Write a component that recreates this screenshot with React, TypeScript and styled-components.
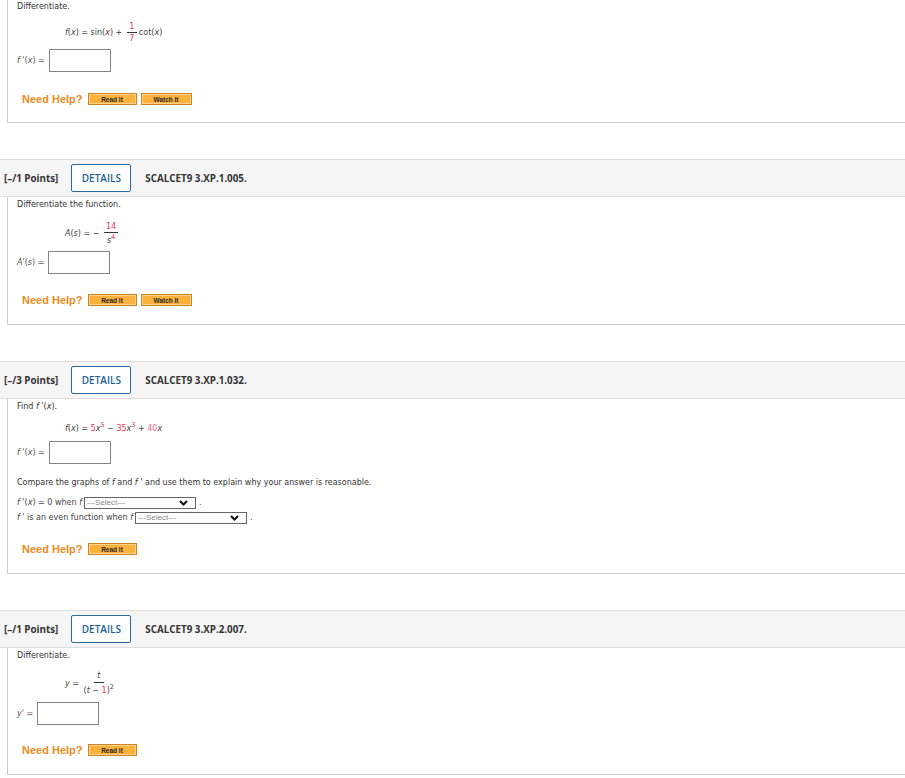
import React from 'react';
import styled, { createGlobalStyle } from 'styled-components';

const Global = createGlobalStyle`
  html, body { margin: 0; padding: 0; background: #fff; }
  body { font-family: "DejaVu Sans", Verdana, sans-serif; color: #333; }
`;

const Page = styled.div`
  width: 905px;
  display: flex;
  flex-direction: column;
`;

const Header = styled.div`
  height: 36px;
  margin-top: 36px;
  background: #f5f5f5;
  border-top: 1px solid #ddd;
  border-bottom: 1px solid #ddd;
  display: flex;
  align-items: center;
  padding-left: 4px;
  font-family: "Open Sans", sans-serif;
  font-weight: 700;
  font-size: 9.8px;
  color: #333;
`;

const DetailsButton = styled.div`
  box-sizing: border-box;
  width: 60px;
  height: 28px;
  margin: 0 14px 0 13px;
  border: 1px solid #2b6a9b;
  border-radius: 2px;
  background: #fff;
  color: #1d5f93;
  font-weight: 600;
  font-size: 10px;
  display: flex;
  align-items: center;
  justify-content: center;
`;

const Body = styled.div<{ $pt?: number; $pb?: number }>`
  margin-left: 7px;
  border-left: 1px solid #ccc;
  border-bottom: 1px solid #ccc;
  padding: ${p => p.$pt ?? 2}px 0 ${p => p.$pb ?? 18}px 9px;
  display: flex;
  flex-direction: column;
  align-items: flex-start;
`;

const Prompt = styled.div<{ $mt?: number }>`
  margin-top: ${p => p.$mt ?? 0}px;
  font-size: 8px;
  line-height: 12px;
  height: 12px;
  color: #333;
  white-space: nowrap;
`;

const Formula = styled.div<{ $mt: number }>`
  margin-top: ${p => p.$mt}px;
  margin-left: 48px;
  display: flex;
  align-items: center;
  font-size: 8px;
  line-height: 12px;
  color: #444;
  white-space: pre;
`;

const Txt = styled.span`
  display: block;
  height: 12px;
  line-height: 12px;
`;

const Frac = styled.span`
  display: flex;
  flex-direction: column;
  align-items: center;
  margin: 0 2px;
`;

const Num = styled.span<{ $h?: number }>`
  display: block;
  height: ${p => p.$h ?? 10}px;
  line-height: 10px;
  padding: 0 2px;
  border-bottom: 1px solid #333;
  text-align: center;
  min-width: 6px;
`;

const Den = styled.span<{ $pt?: number }>`
  display: block;
  height: 10px;
  line-height: 10px;
  padding-top: ${p => p.$pt ?? 1}px;
  white-space: pre;
`;

const Red = styled.span<{ $light?: boolean }>`
  color: ${p => (p.$light ? '#ea6c86' : '#e2375b')};
`;

const V = styled.i`
  font-style: italic;
`;

const Sup = styled.sup`
  font-size: 6.5px;
  line-height: 0;
  vertical-align: 4px;
`;

const AnswerRow = styled.div<{ $mt: number }>`
  margin-top: ${p => p.$mt}px;
  display: flex;
  align-items: center;
  gap: 4px;
  font-size: 8px;
  color: #555;
  white-space: pre;
`;

const AnswerBox = styled.div`
  box-sizing: border-box;
  width: 62px;
  height: 23px;
  border: 1px solid #858585;
  background: #fff;
`;

const SelectRow = styled.div<{ $mt: number }>`
  margin-top: ${p => p.$mt}px;
  height: 12px;
  display: flex;
  align-items: center;
  font-size: 8px;
  line-height: 12px;
  color: #444;
  white-space: pre;
`;

const SelectBox = styled.div`
  box-sizing: border-box;
  width: 112px;
  height: 12px;
  margin: 0 3px 0 2px;
  border: 1px solid #666;
  background: #fff;
  display: flex;
  align-items: center;
  justify-content: space-between;
  padding: 0 7px 0 2px;
  font-family: "Liberation Sans", Arial, sans-serif;
  font-size: 8px;
  color: #888;
`;

const HelpRow = styled.div<{ $mt: number }>`
  margin-top: ${p => p.$mt}px;
  margin-left: 5px;
  height: 12px;
  display: flex;
  align-items: center;
  gap: 4px;
`;

const NeedHelp = styled.span`
  font-family: "Liberation Sans", Arial, sans-serif;
  font-weight: 700;
  font-size: 11px;
  line-height: 12px;
  color: #ec8a24;
  margin-right: 1px;
`;

const HelpButton = styled.div<{ $w: number }>`
  box-sizing: border-box;
  width: ${p => p.$w}px;
  height: 12px;
  border: 1px solid #cf8420;
  background: #fbb13a;
  box-shadow: inset 0 0 0 1px #fdd38f;
  display: flex;
  align-items: center;
  justify-content: center;
  font-family: "Liberation Sans", Arial, sans-serif;
  font-weight: 700;
  font-size: 6.5px;
  color: #2a2a2a;
`;

const Chevron = () => (
  <svg width="9" height="6" viewBox="0 0 9 6">
    <polyline points="1,1 4.5,4.5 8,1" fill="none" stroke="#111" strokeWidth="2" />
  </svg>
);

const Help = ({ mt, watch = true }: { mt: number; watch?: boolean }) => (
  <HelpRow $mt={mt}>
    <NeedHelp>Need Help?</NeedHelp>
    <HelpButton $w={49}>Read It</HelpButton>
    {watch && <HelpButton $w={51}>Watch It</HelpButton>}
  </HelpRow>
);

const ProblemHeader = ({ points, code }: { points: string; code: string }) => (
  <Header>
    <span>{points}</span>
    <DetailsButton>DETAILS</DetailsButton>
    <span>{code}</span>
  </Header>
);

export default function App() {
  return (
    <Page>
      <Global />
      <Body $pt={1} $pb={17}>
        <Prompt>Differentiate.</Prompt>
        <Formula $mt={9}>
          <Txt><V>f</V>(<V>x</V>) = sin(<V>x</V>) + </Txt>
          <Frac>
            <Num><Red>1</Red></Num>
            <Den><Red>7</Red></Den>
          </Frac>
          <Txt>cot(<V>x</V>)</Txt>
        </Formula>
        <AnswerRow $mt={5}>
          <span><V>f</V> '(<V>x</V>) =</span>
          <AnswerBox />
        </AnswerRow>
        <Help mt={21} />
      </Body>

      <ProblemHeader points="[–/1 Points]" code="SCALCET9 3.XP.1.005." />
      <Body>
        <Prompt>Differentiate the function.</Prompt>
        <Formula $mt={11}>
          <Txt><V>A</V>(<V>s</V>) = − </Txt>
          <Frac>
            <Num><Red>14</Red></Num>
            <Den $pt={3}><V>s</V><Sup><Red>4</Red></Sup></Den>
          </Frac>
        </Formula>
        <AnswerRow $mt={5}>
          <span><V>A</V>'(<V>s</V>) =</span>
          <AnswerBox />
        </AnswerRow>
        <Help mt={20} />
      </Body>

      <ProblemHeader points="[–/3 Points]" code="SCALCET9 3.XP.1.032." />
      <Body>
        <Prompt>Find <V>f</V> '(<V>x</V>).</Prompt>
        <Formula $mt={10}>
          <Txt>
            <V>f</V>(<V>x</V>) = <Red>5</Red><V>x</V><Sup><Red>5</Red></Sup> − <Red>35</Red><V>x</V><Sup><Red>3</Red></Sup> + <Red $light>40</Red><V>x</V>
          </Txt>
        </Formula>
        <AnswerRow $mt={6}>
          <span><V>f</V> '(<V>x</V>) =</span>
          <AnswerBox />
        </AnswerRow>
        <Prompt $mt={13}>
          Compare the graphs of <V>f</V> and <V>f</V> ' and use them to explain why your answer is reasonable.
        </Prompt>
        <SelectRow $mt={8}>
          <span><V>f</V> '(<V>x</V>) = 0 when <V>f</V></span>
          <SelectBox><span>---Select---</span><Chevron /></SelectBox>
          <span>.</span>
        </SelectRow>
        <SelectRow $mt={3}>
          <span><V>f</V> ' is an even function when <V>f</V></span>
          <SelectBox><span>---Select---</span><Chevron /></SelectBox>
          <span>.</span>
        </SelectRow>
        <Help mt={19} watch={false} />
      </Body>

      <ProblemHeader points="[–/1 Points]" code="SCALCET9 3.XP.2.007." />
      <Body>
        <Prompt>Differentiate.</Prompt>
        <Formula $mt={9}>
          <Txt><V>y</V> = </Txt>
          <Frac>
            <Num $h={11}><V>t</V></Num>
            <Den $pt={3}>(<V>t</V> − <Red>1</Red>)<Sup>2</Sup></Den>
          </Frac>
        </Formula>
        <AnswerRow $mt={6}>
          <span><V>y</V>' =</span>
          <AnswerBox />
        </AnswerRow>
        <Help mt={19} watch={false} />
      </Body>
    </Page>
  );
}
